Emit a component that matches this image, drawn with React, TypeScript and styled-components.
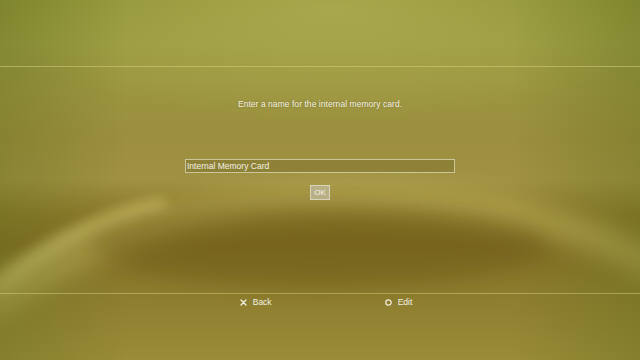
import React from 'react';
import styled, { createGlobalStyle } from 'styled-components';

const GlobalStyle = createGlobalStyle`
  html, body {
    margin: 0;
    padding: 0;
    background: #8c8a34;
  }
  * {
    box-sizing: border-box;
  }
`;

const Screen = styled.div`
  position: relative;
  width: 640px;
  height: 360px;
  overflow: hidden;
  font-family: 'Liberation Sans', Arial, sans-serif;
  color: #f4f1e2;
  background: linear-gradient(
    180deg,
    #8e9236 0%,
    #989a40 12%,
    #9b9640 22%,
    #9c8f3e 38%,
    #a09242 50%,
    #8a782a 60%,
    #836e26 68%,
    #8c7c2e 80%,
    #9a8c38 100%
  );
`;

const Backdrop = styled.svg`
  position: absolute;
  inset: 0;
  width: 640px;
  height: 360px;
`;

const Layout = styled.div`
  position: relative;
  display: flex;
  flex-direction: column;
  height: 100%;
`;

const TopBand = styled.div`
  height: 67px;
  border-bottom: 1px solid rgba(214, 206, 130, 0.55);
`;

const Body = styled.div`
  flex: 1;
  display: flex;
  flex-direction: column;
  align-items: center;
  padding-top: 32px;
`;

const Prompt = styled.div`
  font-size: 8.5px;
  letter-spacing: 0.05px;
  text-shadow: 0 0 2px rgba(60, 50, 0, 0.35);
`;

const NameField = styled.div`
  margin-top: 50px;
  width: 270px;
  height: 14px;
  display: flex;
  align-items: center;
  padding: 0 1px;
  font-size: 8.5px;
  background: rgba(110, 100, 40, 0.35);
  border: 1px solid rgba(225, 220, 190, 0.75);
`;

const OkButton = styled.div`
  margin-top: 12px;
  width: 20px;
  height: 15px;
  display: flex;
  align-items: center;
  justify-content: center;
  font-size: 8px;
  color: #f4f2ea;
  background: rgba(190, 182, 150, 0.8);
  border: 1px solid rgba(225, 220, 200, 0.8);
`;

const Footer = styled.div`
  height: 67px;
  border-top: 1px solid rgba(214, 206, 130, 0.5);
  display: flex;
  justify-content: center;
  gap: 113px;
  padding-top: 1px;
  padding-left: 12px;
`;

const Hint = styled.div`
  display: flex;
  align-items: center;
  gap: 6px;
  height: 14px;
  font-size: 8.5px;
`;

const CrossIcon = () => (
  <svg width="7" height="7" viewBox="0 0 7 7">
    <path d="M1 1 L6 6 M6 1 L1 6" stroke="#f4f1e2" strokeWidth="1.3" strokeLinecap="round" />
  </svg>
);

const CircleIcon = () => (
  <svg width="7" height="7" viewBox="0 0 7 7">
    <circle cx="3.5" cy="3.5" r="2.7" fill="none" stroke="#f4f1e2" strokeWidth="1.2" />
  </svg>
);

const Waves = () => (
  <Backdrop viewBox="0 0 640 360">
    <defs>
      <filter id="blur12" x="-20%" y="-20%" width="140%" height="140%">
        <feGaussianBlur stdDeviation="12" />
      </filter>
      <filter id="blur6" x="-20%" y="-20%" width="140%" height="140%">
        <feGaussianBlur stdDeviation="6" />
      </filter>
      <radialGradient id="topGlow" cx="0.52" cy="0.05" r="0.55">
        <stop offset="0" stopColor="#b2ae54" stopOpacity="0.75" />
        <stop offset="1" stopColor="#b2ae54" stopOpacity="0" />
      </radialGradient>
      <linearGradient id="edgeShade" x1="0" x2="1" y1="0" y2="0">
        <stop offset="0" stopColor="#5f6a18" stopOpacity="0.35" />
        <stop offset="0.2" stopColor="#5f6a18" stopOpacity="0" />
        <stop offset="0.8" stopColor="#5f6a18" stopOpacity="0" />
        <stop offset="1" stopColor="#5f6a18" stopOpacity="0.35" />
      </linearGradient>
    </defs>
    <rect x="0" y="0" width="640" height="200" fill="url(#topGlow)" />
    <path
      d="M-20 300 C 60 230, 180 190, 330 186 C 460 182, 560 200, 660 250 L 660 285 C 560 228, 460 214, 330 214 C 200 216, 90 250, -20 330 Z"
      fill="#bcae58"
      opacity="0.75"
      filter="url(#blur12)"
    />
    <path
      d="M-10 280 C 40 240, 90 212, 160 198 L 172 208 C 100 228, 50 255, 0 298 Z"
      fill="#c8ba66"
      opacity="0.75"
      filter="url(#blur6)"
    />
    <ellipse cx="320" cy="245" rx="230" ry="42" fill="#6d5a12" opacity="0.5" filter="url(#blur12)" />
    <rect x="0" y="0" width="640" height="360" fill="url(#edgeShade)" />
  </Backdrop>
);

export default function App() {
  return (
    <>
      <GlobalStyle />
      <Screen>
        <Waves />
        <Layout>
          <TopBand />
          <Body>
            <Prompt>Enter a name for the internal memory card.</Prompt>
            <NameField>Internal Memory Card</NameField>
            <OkButton>OK</OkButton>
          </Body>
          <Footer>
            <Hint>
              <CrossIcon />
              Back
            </Hint>
            <Hint>
              <CircleIcon />
              Edit
            </Hint>
          </Footer>
        </Layout>
      </Screen>
    </>
  );
}
